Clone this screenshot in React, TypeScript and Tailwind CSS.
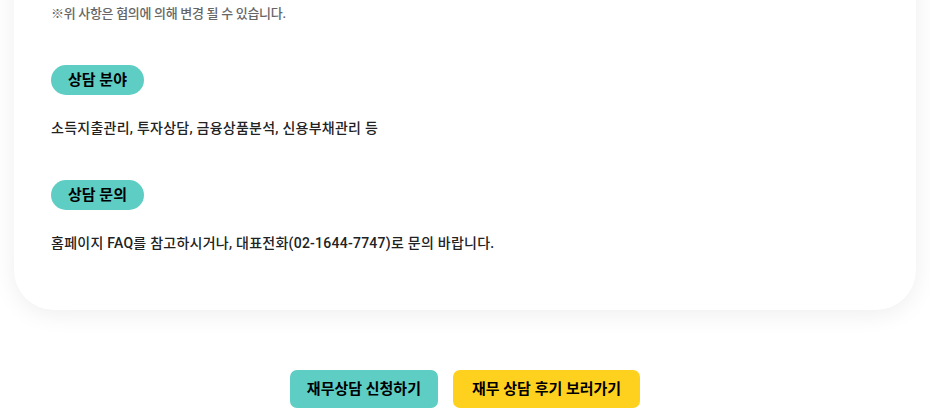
import React from "react";

const FONT = "font-['Roboto','Noto_Sans_CJK_KR',sans-serif]";

const Pill = ({ children }: { children: React.ReactNode }) => (
  <span className="inline-flex h-[30px] items-center rounded-full bg-[#5ecdc4] px-[17px] text-[15px] font-bold text-black">
    {children}
  </span>
);

export default function App() {
  return (
    <main className={`min-h-screen w-full overflow-hidden bg-white ${FONT}`}>
      <div className="px-[14px]">
        {/* card (top is scrolled off) */}
        <section className="-mt-[60px] rounded-[40px] bg-white pb-[58px] pl-[37px] pr-10 pt-[67px] shadow-[0_4px_24px_rgba(0,0,0,0.07)]">
          <p className="text-[13px] font-medium leading-[14px] tracking-[-0.3px] text-[#666]">
            ※위 사항은 협의에 의해 변경 될 수 있습니다.
          </p>

          <div className="mt-[44px]">
            <Pill>상담 분야</Pill>
            <p className="mt-[24px] text-[14px] font-medium leading-[18px] tracking-[0.25px] text-[#222]">
              소득지출관리, 투자상담, 금융상품분석, 신용부채관리 등
            </p>
          </div>

          <div className="mt-[43px]">
            <Pill>상담 문의</Pill>
            <p className="mt-[24px] text-[14px] font-medium leading-[18px] tracking-[0.25px] text-[#222]">
              홈페이지 FAQ를 참고하시거나, 대표전화(02-1644-7747)로 문의 바랍니다.
            </p>
          </div>
        </section>
      </div>

      <div className="mt-[60px] flex justify-center gap-[15px]">
        <button className="h-[38px] rounded-[7px] bg-[#5ecdc4] px-[17px] text-[15px] font-bold text-black">
          재무상담 신청하기
        </button>
        <button className="h-[38px] rounded-[7px] bg-[#ffd11f] px-[19px] text-[15px] font-bold text-black">
          재무 상담 후기 보러가기
        </button>
      </div>
    </main>
  );
}
